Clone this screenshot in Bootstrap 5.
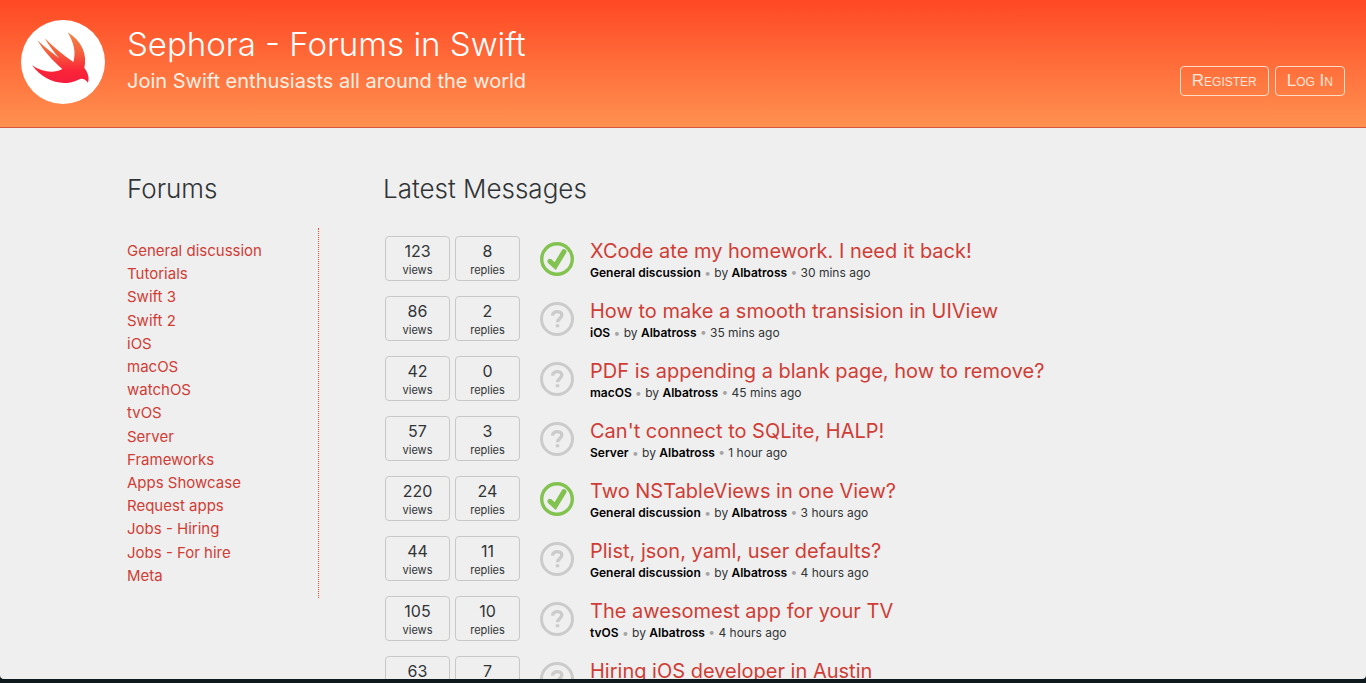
<!DOCTYPE html>
<html lang="en">
<head>
<meta charset="utf-8">
<meta name="viewport" content="width=device-width, initial-scale=1">
<title>Sephora - Forums in Swift</title>
<link href="https://cdn.jsdelivr.net/npm/bootstrap@5.3.0/dist/css/bootstrap.min.css" rel="stylesheet">
<style>
  body { font-family: Inter, "Liberation Sans", Arial, sans-serif; background: #0d191d; color: #303436; }
  a { color: #cf3d36; text-decoration: none; }
  a:hover { color: #a82b25; }
  .window { height: calc(100vh - 4px); background: #efefef; border-radius: 0 0 4px 4px; }
  .masthead { height: 128px; padding: 20px 21px; gap: 22px; background: linear-gradient(#ff4824, #ff9150); border-bottom: 1px solid #d9573a; }
  .site-name { font-size: 33px; line-height: 40px; font-weight: 300; margin: 4px 0 0; }
  .tagline { font-size: 20px; line-height: 30px; font-weight: 400; color: #fff0e4; margin: 2px 0 0; }
  .head-actions { gap: 6px; padding-bottom: 11px; }
  .btn-head { font-family: "Liberation Sans", Arial, sans-serif; font-size: 17px; line-height: 20px; padding: 4px 11px; color: #ffe6d8; border: 1px solid #ffdcc8; border-radius: 4px; font-variant: small-caps; }
  .btn-head:hover { background: #ff8a58; color: #fff; border-color: #fff; }
  .page { padding: 44px 127px 0; gap: 64px; }
  .forums { width: 192px; }
  .heading { font-size: 26px; line-height: 34px; font-weight: 300; margin: 0; }
  .forum-list { margin-top: 22px; min-height: 370px; padding: 11px 0; border-right: 1px dotted #e8502c; font-size: 15px; line-height: 23px; }
  .topics { margin-top: 30px; gap: 15px; padding-left: 2px; }
  .stats { gap: 5px; }
  .stat { width: 65px; height: 45px; border: 1px solid #c8c8c8; border-radius: 4px; text-align: center; padding-top: 4px; }
  .stat b { display: block; font-size: 16px; line-height: 20px; font-weight: 400; }
  .stat span { display: block; font-size: 11px; line-height: 18px; }
  .state { width: 34px; height: 34px; margin: 6px 16px 0 20px; }
  .topic-title { font-size: 20px; line-height: 30px; font-weight: 400; margin: 0; }
  .meta { font-size: 12px; line-height: 14px; margin: 0; }
  .meta b { color: #000; font-weight: 600; }
  .meta i { color: #a5a5a5; font-style: normal; }
</style>
</head>
<body>
<svg class="d-none" aria-hidden="true">
  <symbol id="solved" viewBox="0 0 34 34">
    <circle cx="17" cy="17" r="15.3" fill="none" stroke="#82c24f" stroke-width="3.4"/>
    <path d="M10 19.3 15.2 24.1 24 9.6" fill="none" stroke="#82c24f" stroke-width="5" stroke-linecap="round" stroke-linejoin="miter"/>
  </symbol>
  <symbol id="open" viewBox="0 0 34 34">
    <circle cx="17" cy="17" r="15.5" fill="none" stroke="#cbcbcb" stroke-width="3"/>
    <path d="M12.6 13.6C12.8 8.2 21.8 8.5 21.8 13.1C21.8 16.3 17.5 16.6 17.5 20.3" fill="none" stroke="#cbcbcb" stroke-width="3.4"/>
    <path d="M15.8 22.3h3.4v3h-3.4z" fill="#cbcbcb"/>
  </symbol>
</svg>
<div class="window overflow-hidden">
  <header class="masthead d-flex text-white">
    <a href="#" class="flex-shrink-0" aria-label="Home">
      <svg class="d-block" width="84" height="84" viewBox="0 0 252 252">
        <defs><linearGradient id="bird" x1="0" y1="0" x2="0" y2="1"><stop offset="0" stop-color="#f58346"/><stop offset=".4" stop-color="#f4603d"/><stop offset=".75" stop-color="#fa2538"/><stop offset="1" stop-color="#f51d3d"/></linearGradient></defs>
        <circle cx="126" cy="126" r="126" fill="#fff"/>
        <path fill="url(#bird)" d="M140 37C182 62 200 105 190 144C201 158 206 174 201 188C192 174 180 174 172 179C124 203 68 182 33 136C62 156 98 162 124 147C94 122 68 92 49 61C72 82 92 98 115 115C98 96 84 76 71 54C98 82 128 106 157 126C166 98 158 66 140 37Z"/>
      </svg>
    </a>
    <div class="flex-grow-1">
      <h1 class="site-name">Sephora - Forums in Swift</h1>
      <p class="tagline">Join Swift enthusiasts all around the world</p>
    </div>
    <div class="head-actions d-flex align-items-end">
      <button type="button" class="btn btn-head">Register</button>
      <button type="button" class="btn btn-head">Log In</button>
    </div>
  </header>
  <div class="page d-flex">
    <nav class="forums flex-shrink-0" aria-labelledby="forums-title">
      <h2 class="heading" id="forums-title">Forums</h2>
      <ul class="forum-list list-unstyled d-flex flex-column justify-content-between mb-0">
        <li><a href="#">General discussion</a></li>
        <li><a href="#">Tutorials</a></li>
        <li><a href="#">Swift 3</a></li>
        <li><a href="#">Swift 2</a></li>
        <li><a href="#">iOS</a></li>
        <li><a href="#">macOS</a></li>
        <li><a href="#">watchOS</a></li>
        <li><a href="#">tvOS</a></li>
        <li><a href="#">Server</a></li>
        <li><a href="#">Frameworks</a></li>
        <li><a href="#">Apps Showcase</a></li>
        <li><a href="#">Request apps</a></li>
        <li><a href="#">Jobs - Hiring</a></li>
        <li><a href="#">Jobs - For hire</a></li>
        <li><a href="#">Meta</a></li>
      </ul>
    </nav>
    <main class="flex-grow-1">
      <h2 class="heading">Latest Messages</h2>
      <div class="topics d-flex flex-column">
        <article class="d-flex">
          <div class="stats d-flex"><div class="stat"><b>123</b><span>views</span></div><div class="stat"><b>8</b><span>replies</span></div></div>
          <svg class="state flex-shrink-0" role="img" aria-label="Solved"><use href="#solved"/></svg>
          <div><h3 class="topic-title"><a href="#">XCode ate my homework. I need it back!</a></h3><p class="meta"><b>General discussion</b> <i>•</i> by <b>Albatross</b> <i>•</i> 30 mins ago</p></div>
        </article>
        <article class="d-flex">
          <div class="stats d-flex"><div class="stat"><b>86</b><span>views</span></div><div class="stat"><b>2</b><span>replies</span></div></div>
          <svg class="state flex-shrink-0" role="img" aria-label="Open"><use href="#open"/></svg>
          <div><h3 class="topic-title"><a href="#">How to make a smooth transision in UIView</a></h3><p class="meta"><b>iOS</b> <i>•</i> by <b>Albatross</b> <i>•</i> 35 mins ago</p></div>
        </article>
        <article class="d-flex">
          <div class="stats d-flex"><div class="stat"><b>42</b><span>views</span></div><div class="stat"><b>0</b><span>replies</span></div></div>
          <svg class="state flex-shrink-0" role="img" aria-label="Open"><use href="#open"/></svg>
          <div><h3 class="topic-title"><a href="#">PDF is appending a blank page, how to remove?</a></h3><p class="meta"><b>macOS</b> <i>•</i> by <b>Albatross</b> <i>•</i> 45 mins ago</p></div>
        </article>
        <article class="d-flex">
          <div class="stats d-flex"><div class="stat"><b>57</b><span>views</span></div><div class="stat"><b>3</b><span>replies</span></div></div>
          <svg class="state flex-shrink-0" role="img" aria-label="Open"><use href="#open"/></svg>
          <div><h3 class="topic-title"><a href="#">Can't connect to SQLite, HALP!</a></h3><p class="meta"><b>Server</b> <i>•</i> by <b>Albatross</b> <i>•</i> 1 hour ago</p></div>
        </article>
        <article class="d-flex">
          <div class="stats d-flex"><div class="stat"><b>220</b><span>views</span></div><div class="stat"><b>24</b><span>replies</span></div></div>
          <svg class="state flex-shrink-0" role="img" aria-label="Solved"><use href="#solved"/></svg>
          <div><h3 class="topic-title"><a href="#">Two NSTableViews in one View?</a></h3><p class="meta"><b>General discussion</b> <i>•</i> by <b>Albatross</b> <i>•</i> 3 hours ago</p></div>
        </article>
        <article class="d-flex">
          <div class="stats d-flex"><div class="stat"><b>44</b><span>views</span></div><div class="stat"><b>11</b><span>replies</span></div></div>
          <svg class="state flex-shrink-0" role="img" aria-label="Open"><use href="#open"/></svg>
          <div><h3 class="topic-title"><a href="#">Plist, json, yaml, user defaults?</a></h3><p class="meta"><b>General discussion</b> <i>•</i> by <b>Albatross</b> <i>•</i> 4 hours ago</p></div>
        </article>
        <article class="d-flex">
          <div class="stats d-flex"><div class="stat"><b>105</b><span>views</span></div><div class="stat"><b>10</b><span>replies</span></div></div>
          <svg class="state flex-shrink-0" role="img" aria-label="Open"><use href="#open"/></svg>
          <div><h3 class="topic-title"><a href="#">The awesomest app for your TV</a></h3><p class="meta"><b>tvOS</b> <i>•</i> by <b>Albatross</b> <i>•</i> 4 hours ago</p></div>
        </article>
        <article class="d-flex">
          <div class="stats d-flex"><div class="stat"><b>63</b></div><div class="stat"><b>7</b></div></div>
          <svg class="state flex-shrink-0" role="img" aria-label="Open"><use href="#open"/></svg>
          <div><h3 class="topic-title"><a href="#">Hiring iOS developer in Austin</a></h3></div>
        </article>
      </div>
    </main>
  </div>
</div>
<script src="https://cdn.jsdelivr.net/npm/bootstrap@5.3.0/dist/js/bootstrap.bundle.min.js"></script>
</body>
</html>
